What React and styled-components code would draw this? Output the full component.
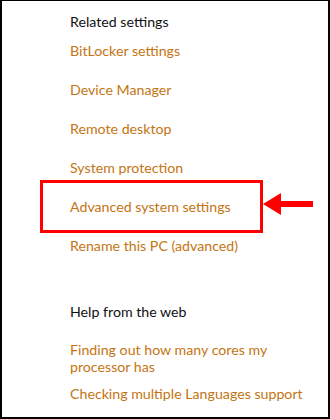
import React from "react";
import styled, { createGlobalStyle } from "styled-components";

const Global = createGlobalStyle`
  html, body { margin: 0; padding: 0; background: #fff; }
  body { font-family: "Lato", "Noto Sans", sans-serif; }
`;

const Frame = styled.div`
  box-sizing: border-box;
  width: 330px;
  height: 419px;
  border: 2px solid #000;
  border-top-width: 1px;
  background: #fff;
  padding: 12px 0 0 68px;
  display: flex;
  flex-direction: column;
`;

const Heading = styled.div`
  font-size: 14.2px;
  line-height: 18px;
  color: #111;
  margin-top: ${(p) => p.$top || 0}px;
`;

const LinkList = styled.div`
  display: flex;
  flex-direction: column;
  gap: ${(p) => p.$gap || 0}px;
  margin-top: ${(p) => p.$top || 0}px;
`;

const Item = styled.div`
  position: relative;
  box-sizing: border-box;
  font-size: 14.2px;
  color: #c47512;
  height: ${(p) => (p.$tall ? "auto" : "39px")};
  line-height: ${(p) => (p.$tall ? "17px" : "39px")};
  width: ${(p) => (p.$tall ? "245px" : "auto")};
`;

const Highlight = styled.div`
  position: relative;
  box-sizing: border-box;
  margin: -7px 0 -7px -30px;
  width: 223px;
  height: 53px;
  border: 3px solid #ff0000;
  padding-left: 27px;
  font-size: 14.2px;
  color: #c47512;
  line-height: 47px;
`;

const Arrow = styled.svg`
  position: absolute;
  left: 217px;
  top: 8px;
`;

export default function App() {
  return (
    <>
      <Global />
      <Frame>
        <Heading>Related settings</Heading>
        <LinkList>
          <Item>BitLocker settings</Item>
          <Item>Device Manager</Item>
          <Item>Remote desktop</Item>
          <Item>System protection</Item>
          <Highlight>
            Advanced system settings
            <Arrow width="54" height="26" viewBox="0 0 54 26">
              <polygon points="3,13 21,2 21,10 53,10 53,16 21,16 21,24" fill="#ff0000" />
            </Arrow>
          </Highlight>
          <Item>Rename this PC (advanced)</Item>
        </LinkList>
        <Heading $top={38}>Help from the web</Heading>
        <LinkList $top={20} $gap={10}>
          <Item $tall>Finding out how many cores my processor has</Item>
          <Item $tall>Checking multiple Languages support</Item>
        </LinkList>
      </Frame>
    </>
  );
}
